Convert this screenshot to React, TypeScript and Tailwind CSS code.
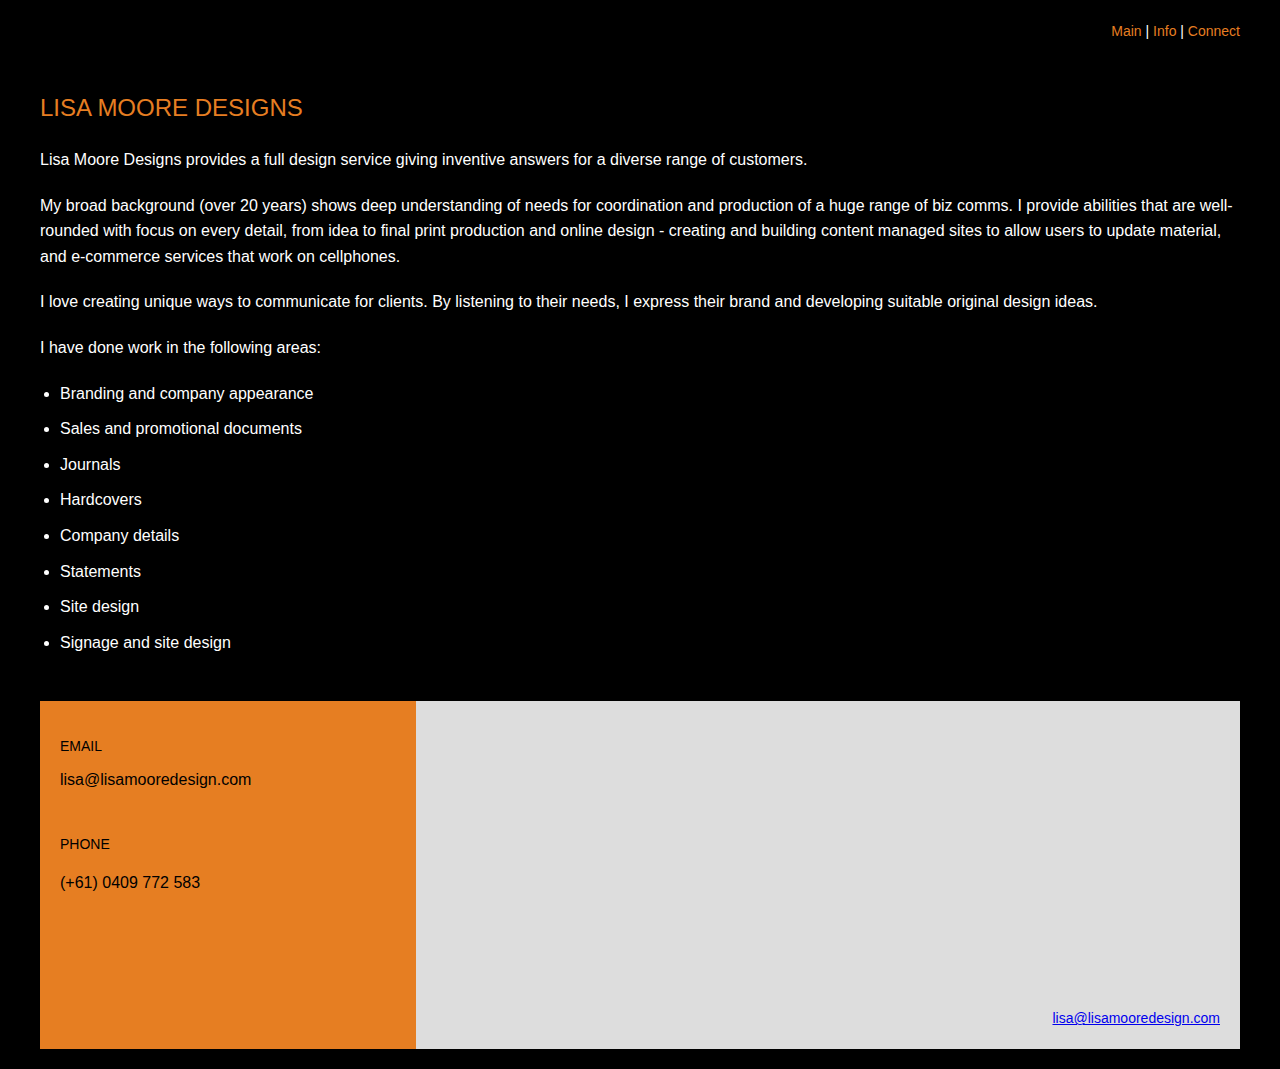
export default function App() {
  const areas = [
    'Branding and company appearance',
    'Sales and promotional documents',
    'Journals',
    'Hardcovers',
    'Company details',
    'Statements',
    'Site design',
    'Signage and site design',
  ];

  return (
    <div className="min-h-screen bg-black px-10 pt-[23px] pb-5 text-white font-['Liberation_Sans',Arial,sans-serif]">
      <nav className="text-right text-[14px] leading-4">
        <a href="#" className="text-[#e67e22]">Main</a> |{' '}
        <a href="#" className="text-[#e67e22]">Info</a> |{' '}
        <a href="#" className="text-[#e67e22]">Connect</a>
      </nav>

      <h1 className="mt-[54px] text-[24px] leading-[29px] text-[#e67e22]">LISA MOORE DESIGNS</h1>

      <div className="mt-[25px] text-base leading-[1.6]">
        <p className="mb-5">
          Lisa Moore Designs provides a full design service giving inventive answers for a diverse range of customers.
        </p>
        <p className="mb-5">
          My broad background (over 20 years) shows deep understanding of needs for coordination and production of a huge range of biz comms. I provide abilities that are well-rounded with focus on every detail, from idea to final print production and online design - creating and building content managed sites to allow users to update material, and e-commerce services that work on cellphones.
        </p>
        <p className="mb-5">
          I love creating unique ways to communicate for clients. By listening to their needs, I express their brand and developing suitable original design ideas.
        </p>
        <p className="mb-5">I have done work in the following areas:</p>
        <ul className="list-disc pl-5">
          {areas.map((a) => (
            <li key={a} className="mb-[10px]">{a}</li>
          ))}
        </ul>
      </div>

      <footer className="mt-[46px] flex h-[348px]">
        <div className="w-[376px] bg-[#e67e22] px-5 pt-[37px] text-black">
          <h3 className="text-[14px] leading-4">EMAIL</h3>
          <p className="mt-[16px] text-base leading-[20px]">lisa@lisamooredesign.com</p>
          <h3 className="mt-[46px] text-[14px] leading-4">PHONE</h3>
          <p className="mt-[21px] text-base leading-[20px]">(+61) 0409 772 583</p>
        </div>
        <div className="flex flex-1 items-end justify-end bg-[#dddddd] px-5 pb-[23px]">
          <a href="#" className="text-[14px] leading-4 text-[#0000ee] underline">lisa@lisamooredesign.com</a>
        </div>
      </footer>
    </div>
  );
}
